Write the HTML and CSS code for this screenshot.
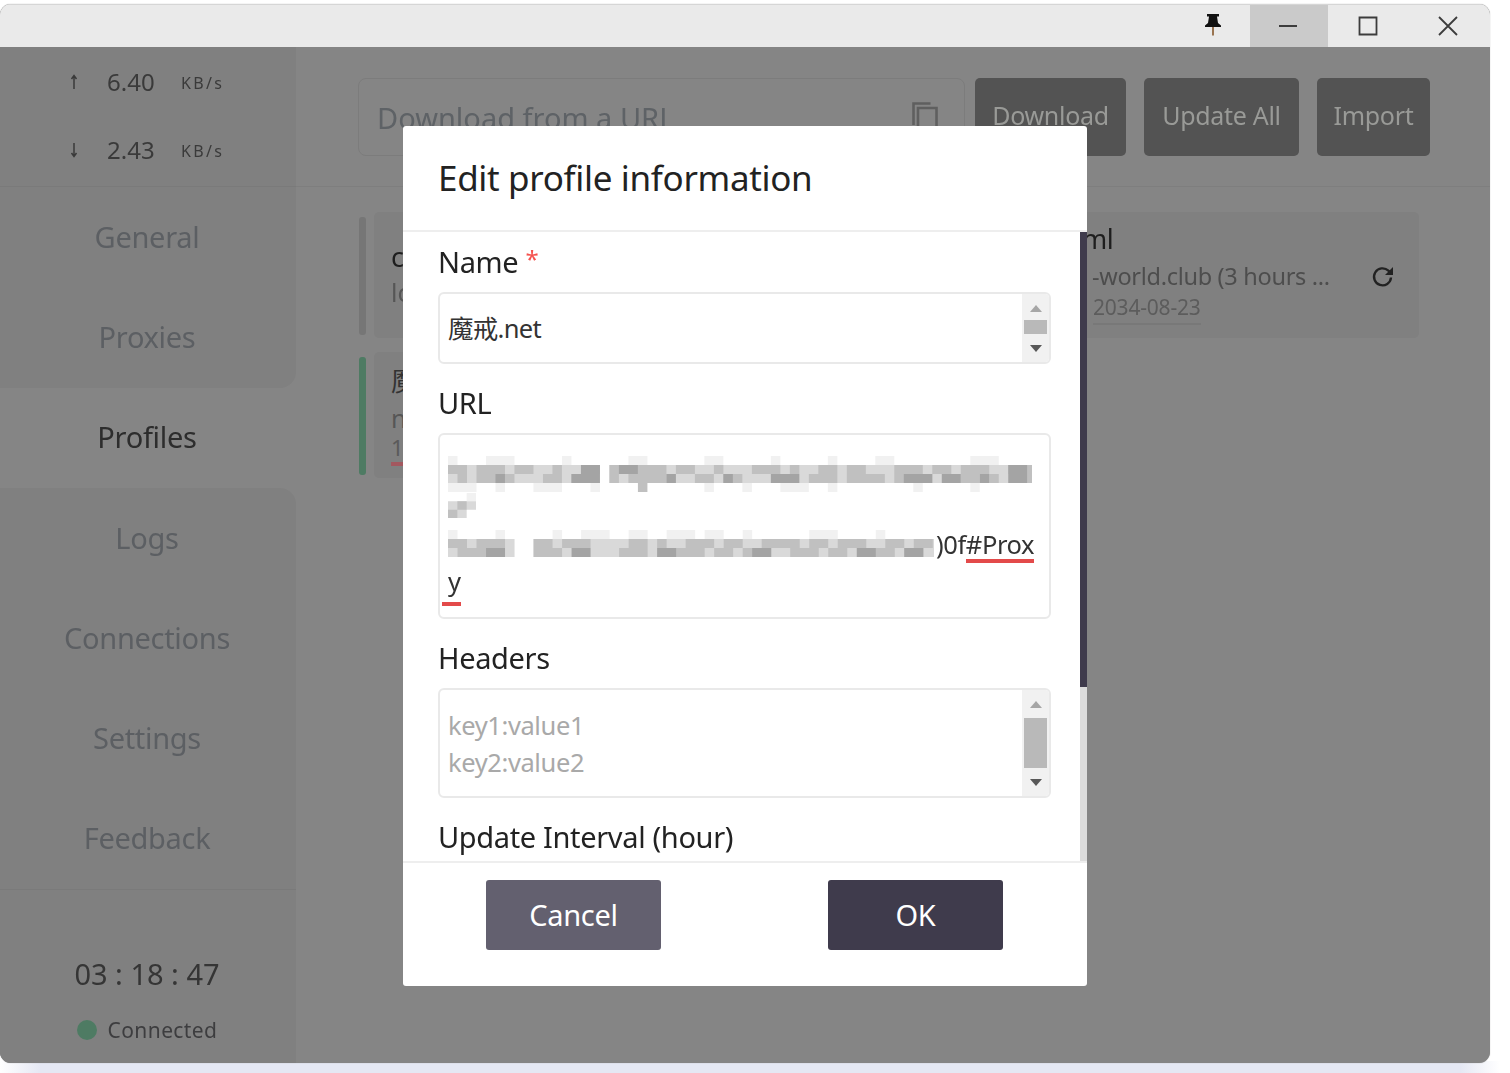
FILE: index.html
```html
<!DOCTYPE html>
<html lang="en">
<head>
<meta charset="utf-8">
<title>Clash profile editor</title>
<link rel="stylesheet" href="styles.css">
</head>
<body>
<div class="window">
  <header class="titlebar">
    <button class="tb-pin" aria-label="Pin">
      <svg width="18" height="24" viewBox="0 0 18 24"><path class="pin-head" d="M3 1h12v2.500h-2l1 6.500 3 2.500v1.500H1v-1.500l3-2.500 1-6.500H3z"/><path class="pin-needle" d="M8 14h2v8.500H8z"/></svg>
    </button>
    <button class="tb-btn tb-active" aria-label="Minimize">
      <svg width="20" height="20" viewBox="0 0 20 20"><path class="tb-stroke" d="M1 10h18"/></svg>
    </button>
    <button class="tb-btn" aria-label="Maximize">
      <svg width="20" height="20" viewBox="0 0 20 20"><path class="tb-stroke" d="M1.500 1.500h17v17h-17z"/></svg>
    </button>
    <button class="tb-btn tb-close" aria-label="Close">
      <svg width="20" height="20" viewBox="0 0 20 20"><path class="tb-stroke" d="M1 1l18 18M19 1L1 19"/></svg>
    </button>
  </header>

  <div class="main">
    <aside class="sidebar">
      <section class="traffic">
        <div class="rate">
          <svg class="rate-arrow" width="8" height="16" viewBox="0 0 8 16"><path d="M4 15V2M1.500 5L4 1.500 6.500 5"/></svg>
          <span class="rate-value">6.40</span><span class="rate-unit">KB/s</span>
        </div>
        <div class="rate">
          <svg class="rate-arrow" width="8" height="16" viewBox="0 0 8 16"><path d="M4 1v13M1.500 11L4 14.500 6.500 11"/></svg>
          <span class="rate-value">2.43</span><span class="rate-unit">KB/s</span>
        </div>
      </section>
      <nav class="nav">
        <a class="nav-item">General</a>
        <a class="nav-item nav-before">Proxies</a>
        <a class="nav-item nav-current">Profiles</a>
        <a class="nav-item nav-after">Logs</a>
        <a class="nav-item">Connections</a>
        <a class="nav-item">Settings</a>
        <a class="nav-item">Feedback</a>
      </nav>
      <section class="status">
        <div class="clock">03 : 18 : 47</div>
        <div class="conn"><span class="conn-dot"></span><span>Connected</span></div>
      </section>
    </aside>

    <div class="content">
      <div class="toolbar">
        <div class="url-input">
          <span>Download from a URL</span>
          <svg class="copy-icon" width="26" height="30" viewBox="0 0 26 30"><path d="M1.500 23V1.500h17M6 28V6h18.500v22z"/></svg>
        </div>
        <button class="tool-btn tool-download">Download</button>
        <button class="tool-btn tool-update">Update All</button>
        <button class="tool-btn tool-import">Import</button>
      </div>
      <div class="profiles">
        <div class="profile">
          <div class="rail"></div>
          <div class="card">
            <div class="card-title">c</div>
            <div class="card-sub">lo</div>
          </div>
        </div>
        <div class="profile profile-right">
          <div class="card card-right">
            <div class="card-title title-right">ml</div>
            <div class="card-sub sub-right">-world.club (3 hours ...</div>
            <div class="card-date date-right">2034-08-23</div>
            <svg class="refresh" width="24" height="24" viewBox="0 0 24 24"><path d="M20 13.500a8.500 8.500 0 1 1-2.600-6.800L20 9"/><path class="refresh-head" d="M22 3v8h-8z"/></svg>
          </div>
        </div>
        <div class="profile">
          <div class="rail rail-on"></div>
          <div class="card card-three">
            <div class="card-title title-cjk">魔</div>
            <div class="card-sub">n</div>
            <div class="card-date date-used">1</div>
          </div>
        </div>
      </div>
    </div>
  </div>

  <div class="modal">
    <h2 class="modal-title">Edit profile information</h2>
    <div class="modal-body">
      <form class="form">
        <label class="field-label">Name <span class="req">*</span></label>
        <div class="box box-name">
          <div class="box-text box-text-name cjk">魔戒.net</div>
          <div class="vbar">
            <i class="arrow-up"></i><i class="thumb thumb-name"></i><i class="arrow-down"></i>
          </div>
        </div>

        <label class="field-label">URL</label>
        <div class="box box-url">
          <div class="box-text">
            <div class="url-line">
              <svg class="mosaic" width="584" height="36" viewBox="0 0 492 36" preserveAspectRatio="none">
                <path class="m0" d="M0 4.500h492" stroke-dasharray="8 24 24 40 8 48 16 48 16 40 8 40 8 32 16 64 24 88"/>
                <path class="m1" d="M0 13.500h128M136 13.500h356M0 22.500h128M136 22.500h356"/>
                <path class="m2" d="M0 13.500h128M136 13.500h356" stroke-dasharray="16 8 24 8 16 16 8 24 24 8 8 16 16 8 16 24 24 8 16 8 24 16 8 8 16 32 16 8 24 8"/>
                <path class="m2" d="M8 22.500h120M136 22.500h356" stroke-dasharray="8 8 32 24 16 8 16 32 8 16 24 8 32 8 16 8 8 24 16 8 8 24 32 8 8 16"/>
                <path class="m3" d="M40 22.500h8M104 22.500h16M112 13.500h16M112 22.500h16M144 13.500h16M184 22.500h8M232 22.500h8M272 22.500h24M384 22.500h24M416 22.500h16M448 22.500h8M472 13.500h16M472 22.500h16"/>
                <path class="m0" d="M0 31.500h492" stroke-dasharray="24 16 8 24 24 24 8 88 8 24 8 24 24 16 8 64 8 40 8 56"/>
                <path class="m2" d="M160 31.500h8"/>
              </svg>
            </div>
            <div class="url-line">
              <svg class="mosaic mosaic-short" width="28" height="25" viewBox="0 0 24 25" preserveAspectRatio="none">
                <path class="m0" d="M16 4.200h8"/>
                <path class="m1" d="M0 12.500h24M0 20.800h16"/>
                <path class="m2" d="M8 12.500h8M0 20.800h8"/>
              </svg>
            </div>
            <div class="url-line">
              <svg class="mosaic mosaic-third" width="486" height="36" viewBox="0 0 409 36" preserveAspectRatio="none">
                <path class="m0" d="M0 4.500h409" stroke-dasharray="8 32 8 40 8 16 24 16 16 16 24 8 16 16 8 48 24 32 8 64"/>
                <path class="m1" d="M0 13.500h56M72 13.500h337M0 22.500h56M72 22.500h337"/>
                <path class="m2" d="M0 13.500h56M72 13.500h337" stroke-dasharray="16 8 24 32 16 8 8 16 24 8 16 16 32 8 16 8 24 16 16 8 16 24 16 8 16 32"/>
                <path class="m2" d="M8 22.500h48M72 22.500h337" stroke-dasharray="24 48 24 16 32 8 16 8 24 16 24 8 16 16 24 8 16 24"/>
                <path class="m3" d="M32 22.500h16M104 22.500h16M176 22.500h16M256 22.500h16M344 22.500h16M384 22.500h16"/>
              </svg><span class="url-tail">)0f<span class="typo">#Prox</span></span>
            </div>
            <div class="url-line"><span class="typo typo-wide">y</span></div>
          </div>
        </div>

        <label class="field-label">Headers</label>
        <div class="box box-headers">
          <div class="box-text placeholder">key1:value1<br>key2:value2</div>
          <div class="vbar">
            <i class="arrow-up"></i><i class="thumb thumb-headers"></i><i class="arrow-down"></i>
          </div>
        </div>

        <label class="field-label">Update Interval (hour)</label>
      </form>
      <div class="modal-scroll"><i class="modal-thumb"></i></div>
    </div>
    <footer class="modal-footer">
      <button class="btn btn-cancel" type="button">Cancel</button>
      <button class="btn btn-ok" type="button">OK</button>
    </footer>
  </div>
</div>
</body>
</html>
```
FILE: styles.css
```css
* { box-sizing: border-box; }
html, body { margin: 0; height: 1073px; overflow: hidden; }
body {
  font-family: "Noto Sans", "Noto Sans CJK SC", sans-serif;
  background:
    linear-gradient(90deg, #fff 0, #e5e8f4 40px, #e5e8f4 1460px, #fff 1500px) 0 100% / 100% 12px no-repeat,
    #fff;
  padding-top: 4px;
}
button { font: inherit; border: 0; padding: 0; }

.window {
  position: relative;
  width: 1490px;
  height: 1059px;
  border-radius: 11px;
  overflow: hidden;
  display: flex;
  flex-direction: column;
  background: #858585;
  box-shadow: 0 0 1px #999;
  filter: blur(.45px);
}

/* Title bar */
.titlebar {
  height: 43px;
  flex: none;
  background: #eaeaea;
  border-top: 1px solid #d6d6d6;
  display: flex;
  justify-content: flex-end;
}
.tb-pin { width: 80px; background: none; display: flex; align-items: center; justify-content: center; padding: 0 0 3px 6px; }
.pin-head { fill: #111; }
.pin-needle { fill: #9a7450; }
.tb-btn { width: 80px; background: none; display: flex; align-items: center; justify-content: center; }
.tb-active { width: 78px; background: #cacaca; padding-right: 3px; }
.tb-close { width: 82px; padding-right: 2px; }
.tb-stroke { fill: none; stroke: #3c3c3c; stroke-width: 1.800; }

/* Main */
.main { flex: 1; display: flex; min-height: 0; }
.sidebar {
  width: 296px;
  flex: none;
  display: flex;
  flex-direction: column;
  background: #808080;
}
.traffic {
  height: 140px;
  flex: none;
  border-bottom: 1px solid #7a7a7a;
  display: flex;
  flex-direction: column;
  padding-top: 17px;
  gap: 33px;
}
.rate { height: 35px; display: flex; align-items: center; padding-left: 70px; color: #3a3a3a; }
.rate-arrow { fill: none; stroke: #3a3a3a; stroke-width: 1.500; }
.rate-value { width: 74px; margin-left: 29px; font-size: 24px; letter-spacing: 0; }
.rate-unit { font-size: 16px; letter-spacing: 2.300px; padding-top: 3px; }

.nav { display: grid; grid-template-rows: repeat(7, 100.300px); flex: none; border-bottom: 1px solid #7a7a7a; background: #858585; }
.nav-item {
  display: flex;
  align-items: center;
  justify-content: center;
  font-size: 29px;
  letter-spacing: -.3px;
  color: #5c5f63;
  background: #808080;
  padding: 0 2px 2px 0;
}
.nav-before { border-bottom-right-radius: 16px; }
.nav-after { border-top-right-radius: 16px; }
.nav-current { background: #858585; color: #2d2d2d; }
.status { flex: 1; display: flex; flex-direction: column; align-items: center; padding-right: 2px; }
.clock { margin-top: 64px; font-size: 29px; line-height: 40px; color: #353535; }
.conn { display: flex; align-items: center; gap: 11px; margin-top: 21px; font-size: 21px; line-height: 30px; letter-spacing: .4px; color: #3d3d3f; }
.conn-dot { width: 20px; height: 20px; border-radius: 50%; background: #4e7b63; }

/* Content */
.content { flex: 1; min-width: 0; display: flex; flex-direction: column; }
.toolbar {
  height: 140px;
  flex: none;
  border-bottom: 1px solid #7e7e7e;
  padding: 31px 0 0 62px;
  display: flex;
  align-items: flex-start;
}
.url-input {
  width: 607px;
  height: 78px;
  border: 1px solid #7c7c7c;
  border-radius: 8px;
  display: flex;
  align-items: center;
  justify-content: space-between;
  padding: 0 26px 0 18px;
  font-size: 29px;
  color: #5e6266;
}
.copy-icon { fill: none; stroke: #5f5f5f; stroke-width: 2.600; }
.tool-btn {
  height: 78px;
  background: #535353;
  color: #999a97;
  font-size: 25px;
  letter-spacing: -.3px;
  border-radius: 5px;
  padding-bottom: 5px;
}
.tool-download { width: 151px; margin-left: 10px; }
.tool-update { width: 155px; margin-left: 18px; }
.tool-import { width: 113px; margin-left: 18px; }

.profiles {
  display: grid;
  grid-template-columns: 540px 520px;
  grid-auto-rows: 126px;
  row-gap: 14px;
  padding: 25px 0 0 63px;
}
.profile { display: flex; gap: 8px; }
.rail { width: 7px; margin: 5px 0 3px; border-radius: 3px; background: #767676; flex: none; }
.rail-on { background: #4e7b63; }
.card { flex: 1; background: #808080; border-radius: 5px; padding: 27px 0 0 17px; position: relative; }
.card-three { padding-top: 10px; }
.card-title { font-size: 27px; line-height: 36px; color: #1e1e1e; }
.title-cjk { color: #333; font-family: "Noto Sans CJK SC", sans-serif; }
.card-sub { font-size: 25px; line-height: 34px; color: #565656; }
.card-three .card-sub { line-height: 40px; }
.card-date { font-size: 22px; line-height: 34px; color: #5a5a5a; }
.date-used { display: inline-block; margin-top: -3px; border-bottom: 4px solid #a3585f; line-height: 24px; padding: 0 8px 3px 0; }
.card-right { padding: 8px 0 0 183px; }
.title-right { line-height: 37px; letter-spacing: -.5px; }
.sub-right { margin-left: 10px; font-size: 23.500px; letter-spacing: -.3px; line-height: 38px; color: #4d4d4d; }
.date-right { display: inline-block; margin-left: 11px; font-size: 21px; letter-spacing: -.2px; line-height: 24px; border-bottom: 2px solid #787878; padding-bottom: 4px; color: #5c5c5c; }
.refresh { position: absolute; right: 24px; top: 52px; fill: none; stroke: #222; stroke-width: 2.400; }
.refresh-head { fill: #222; stroke: none; }

/* Modal */
.modal {
  position: absolute;
  left: 403px;
  top: 122px;
  width: 684px;
  height: 860px;
  background: #fff;
  border-radius: 3px;
  display: flex;
  flex-direction: column;
}
.modal-title {
  margin: 0;
  height: 106px;
  flex: none;
  border-bottom: 2px solid #eeeeee;
  padding: 27px 0 0 35px;
  font-size: 35px;
  letter-spacing: -.33px;
  line-height: 50px;
  font-weight: 400;
  color: #222;
}
.modal-body { flex: 1; min-height: 0; position: relative; overflow: hidden; }
.form { padding: 10px 0 0 35px; width: 648px; }
.field-label { display: block; height: 40px; font-size: 29px; letter-spacing: -.35px; line-height: 40px; color: #222; margin-bottom: 10px; }
.req { color: #f5534f; font-size: 24px; line-height: 0; vertical-align: 5px; }
.box {
  position: relative;
  width: 613px;
  background: #fff;
  border: 2px solid #e9e9e9;
  border-radius: 6px;
  margin-bottom: 19px;
}
.box-name { height: 72px; }
.box-url { height: 186px; }
.box-headers { height: 110px; }
.box-text { padding: 17px 0 0 8px; font-size: 25.500px; letter-spacing: -.4px; line-height: 37px; color: #333; }
.box-text-name { padding-top: 16px; letter-spacing: -.7px; }
.cjk { font-family: "Noto Sans", "Noto Sans CJK SC", sans-serif; }
.placeholder { color: #a9a9a9; }
.url-line { height: 37px; position: relative; white-space: nowrap; }
.mosaic { display: inline-block; vertical-align: top; margin-top: 4px; }
.m0, .m1, .m2, .m3 { fill: none; stroke-width: 9; }
.mosaic-short .m0, .mosaic-short .m1, .mosaic-short .m2 { stroke-width: 8.300; }
.m0 { stroke: #f1f1f1; }
.m1 { stroke: #d9d9d9; }
.m2 { stroke: #c0c0c0; }
.m3 { stroke: #a4a4a4; }
.url-tail { color: #333; margin-left: 2px; }
.typo { position: relative; }
.typo::after {
  content: "";
  position: absolute;
  left: 0;
  right: 0;
  bottom: -2px;
  height: 4px;
  background: #e34a4a;
}
.typo-wide::after { left: -6px; bottom: -8px; }

.vbar {
  position: absolute;
  right: 0;
  top: 0;
  bottom: 0;
  width: 27px;
  background: #f1f1f1;
  border-radius: 0 4px 4px 0;
  display: flex;
  flex-direction: column;
  align-items: center;
  padding: 11px 0 0 0;
}
.vbar i { display: block; flex: none; }
.arrow-up { width: 0; height: 0; border: 6px solid transparent; border-top: 0; border-bottom: 7px solid #a6a6a6; }
.arrow-down { width: 0; height: 0; border: 6px solid transparent; border-bottom: 0; border-top: 7px solid #585858; margin-top: 11px; }
.thumb { width: 23px; background: #b9b9b9; }
.thumb-name { height: 14px; margin-top: 8px; }
.thumb-headers { height: 50px; margin-top: 10px; }

.modal-scroll { position: absolute; right: 0; top: 0; bottom: 0; width: 7px; background: #dcdcdc; }
.modal-thumb { display: block; height: 455px; background: #3f3b4c; }

.modal-footer {
  height: 125px;
  flex: none;
  border-top: 2px solid #eeeeee;
  display: flex;
  justify-content: space-between;
  padding: 17px 84px 0 83px;
  align-items: flex-start;
}
.btn { width: 175px; height: 70px; border-radius: 3px; color: #fff; font-size: 29px; letter-spacing: -.3px; padding-bottom: 2px; }
.btn-cancel { background: #63606f; }
.btn-ok { background: #3f3b4c; }
```
